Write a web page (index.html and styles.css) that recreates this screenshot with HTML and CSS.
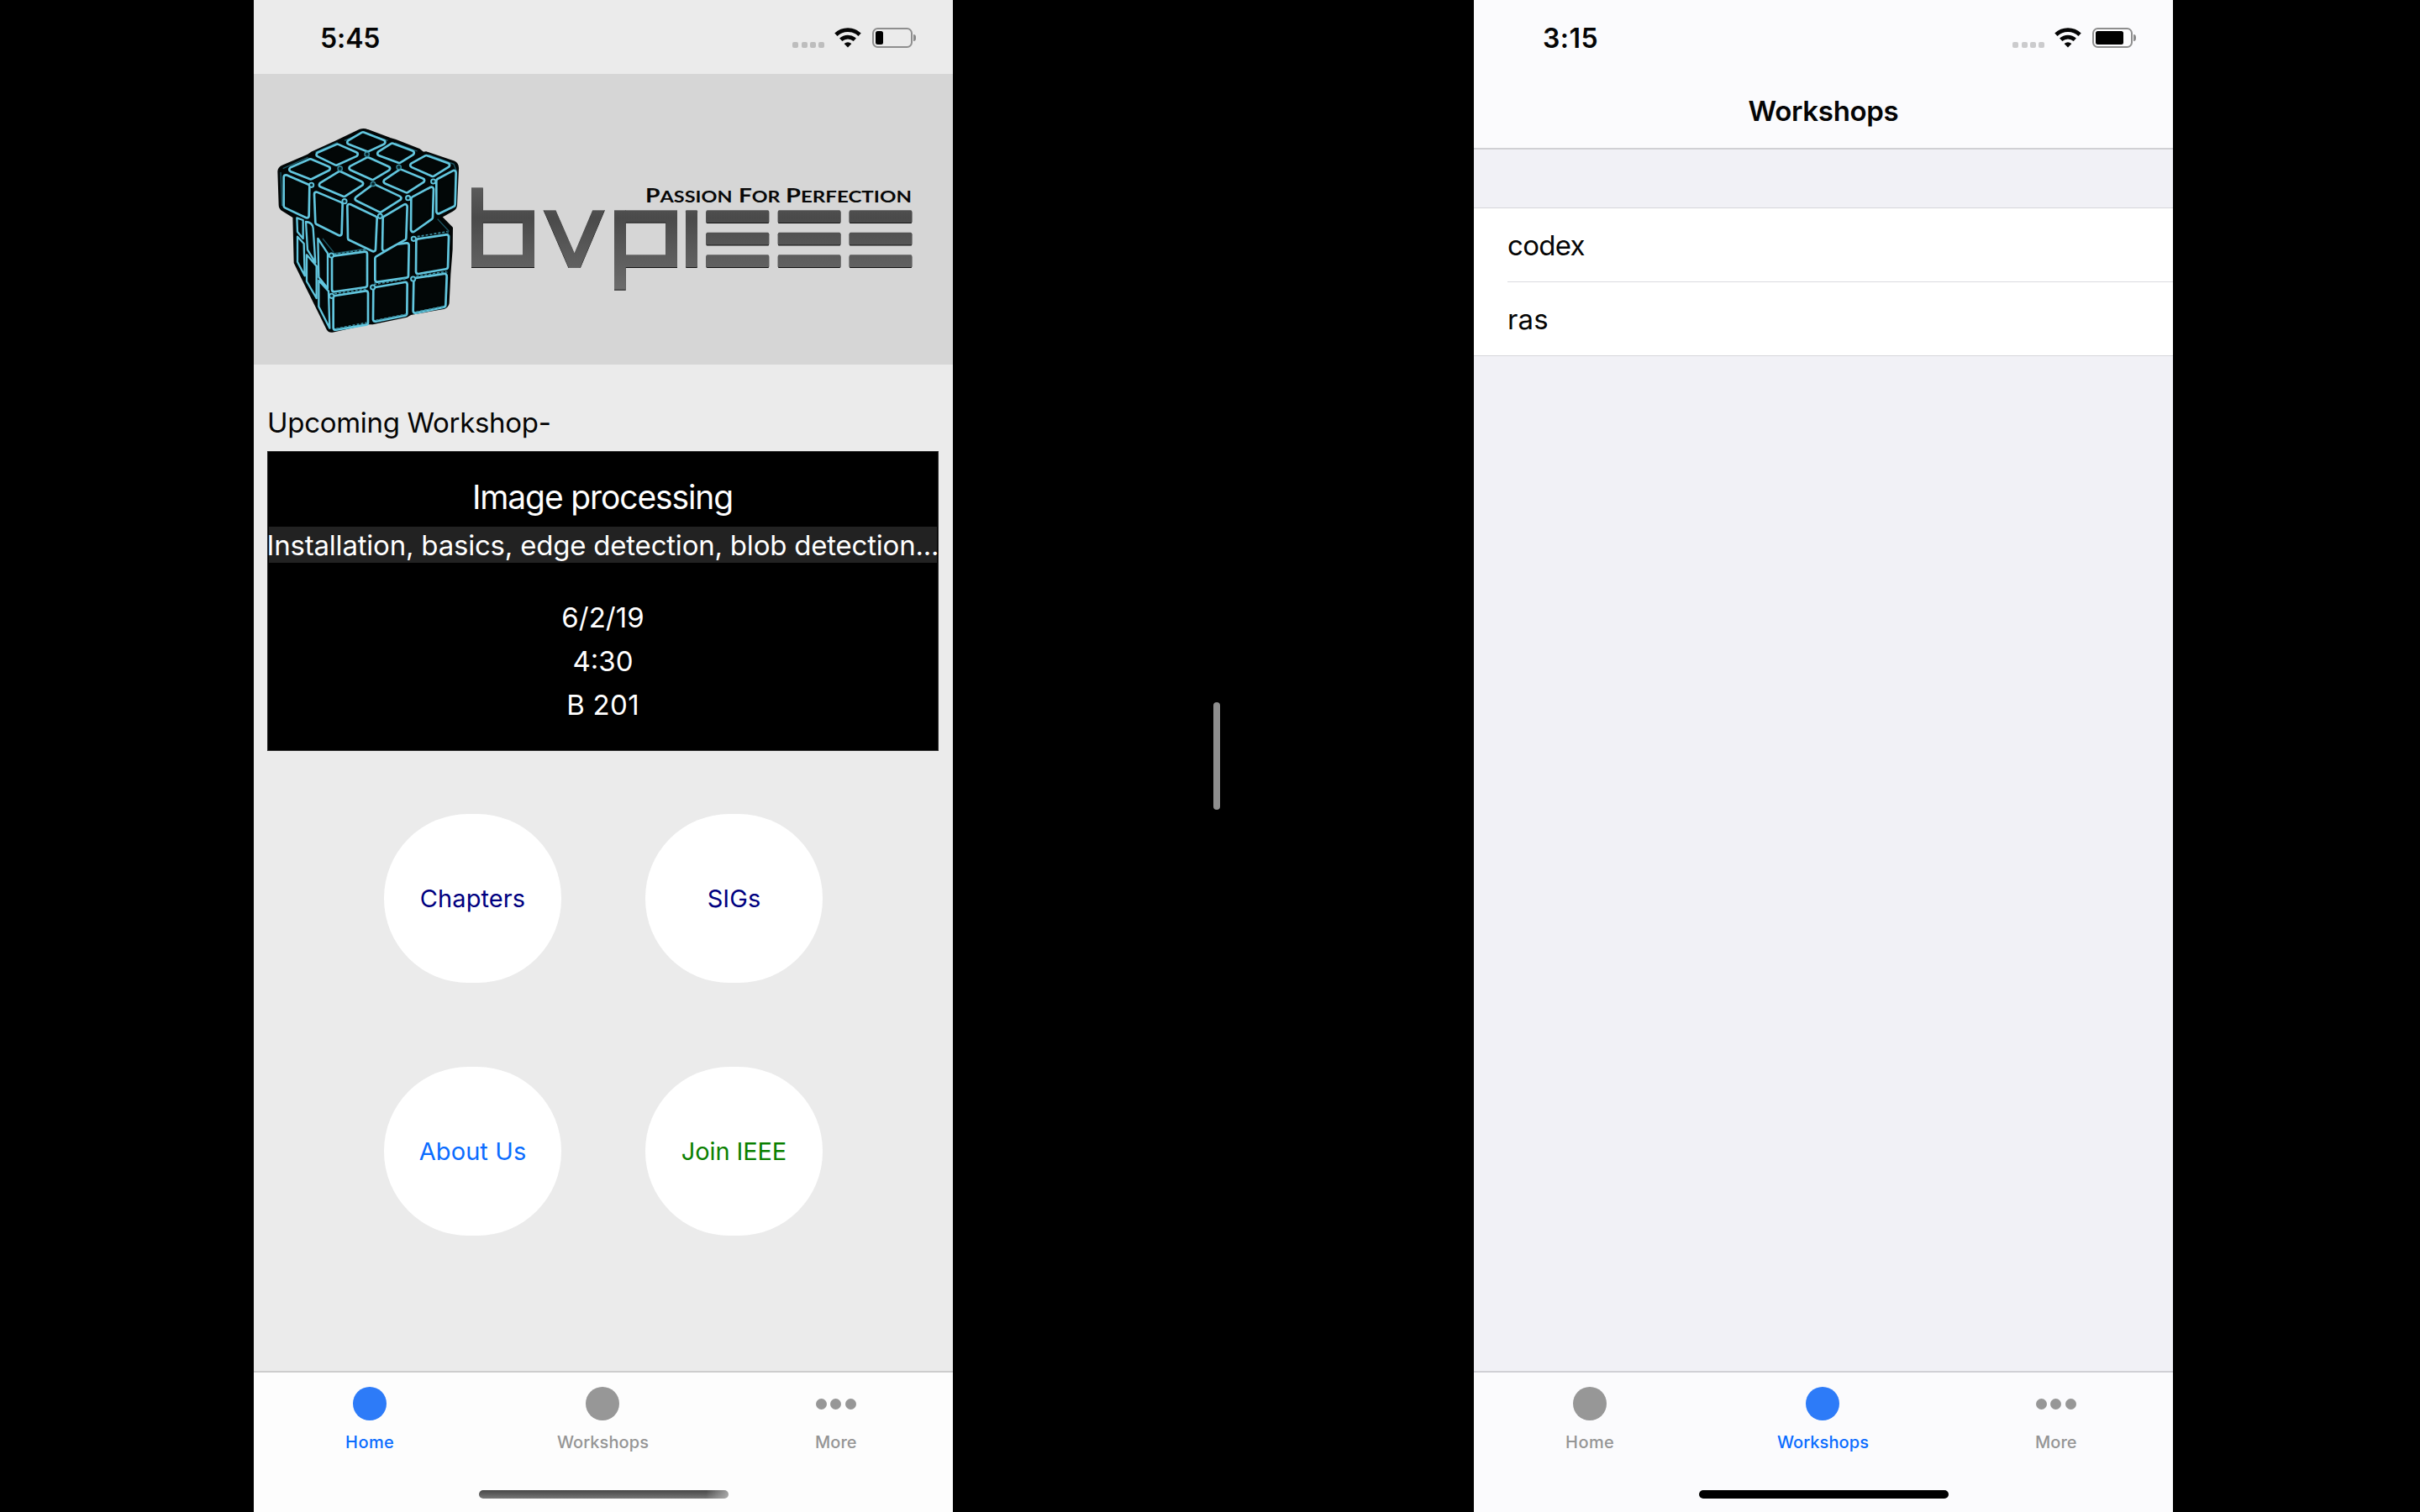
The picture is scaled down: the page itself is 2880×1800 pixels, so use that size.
FILE: index.html
```
<!DOCTYPE html>
<html lang="en">
<head>
<meta charset="utf-8">
<title>BVPIEEE app</title>
<link rel="stylesheet" href="styles.css">
</head>
<body>
<svg class="defs" aria-hidden="true">
  <symbol id="wifi" viewBox="0 0 32 24">
    <g fill="none" stroke="#050505" stroke-width="4.8">
      <path d="M1.9 8.2A20.5 20.5 0 0 1 30.1 8.2"/>
      <path d="M7.7 14.3A12.2 12.2 0 0 1 24.3 14.3"/>
    </g>
    <path fill="#050505" d="M16 23.6 11.6 19.1Q16 15.2 20.4 19.1Z"/>
  </symbol>
</svg>
<main class="stage">
  <section class="phone phone-home">
    <header class="status">
      <span class="time">5:45</span>
      <div class="indicators">
        <div class="signal"><i></i><i></i><i></i><i></i></div>
        <svg class="wifi"><use href="#wifi"/></svg>
        <div class="battery low"><i></i></div>
        <div class="nub"></div>
      </div>
    </header>
    <svg class="banner" viewBox="302 88 832 346" role="img" aria-label="bvpieee">
      <defs>
        <linearGradient id="steel" gradientUnits="userSpaceOnUse" x1="0" y1="223" x2="0" y2="345">
          <stop offset="0" stop-color="#5b5b5b"/><stop offset=".3" stop-color="#4a4a4a"/><stop offset="1" stop-color="#6c6c6c"/>
        </linearGradient>
        <g id="tiles" stroke-linejoin="round">
          <path d="M366 90 437 118 383 143 318 118ZM275 133 339 161 270 192 208 162ZM470 130 540 156 495 184 426 158ZM178 186 240 212 180 242 111 215ZM383 180 454 212 400 244 325 210ZM592 173 667 200 615 232 543 200ZM283 230 358 266 298 304 218 270ZM500 223 577 255 522 290 448 258ZM405 276 494 318 428 360 346 320Z"/>
          <path d="M91 243 167 276 165 380 91 345ZM200 304 285 340 282 443 204 404ZM318 347 408 390 403 500 320 460ZM445 390 516 348 512 460 443 498ZM546 320 610 286 607 386 545 430ZM636 256 690 227 687 340 636 365Z"/>
          <path d="M263 532 373 517 373 628 263 644ZM417 533 490 490 522 486 520 594 417 609ZM564 471 664 456 661 563 563 580ZM268 674 376 657 376 762 268 780ZM411 644 516 626 515 729 410 750ZM555 611 657 596 653 699 553 720Z"/>
        </g>
      </defs>
      <g transform="translate(310 130) scale(.33333)">
        <path fill="#020606" stroke="#020606" stroke-width="10" stroke-linejoin="round" d="M356 76Q369 71 382 77L462 107 480 112 566 146 580 157 592 156 690 189Q705 196 703 215L697 344Q695 355 685 360L642 384 682 424 681 500 674 590 669 692Q667 704 654 709L536 730 522 738 400 764 388 763 256 792Q246 794 240 784L124 548 120 384 78 358Q70 352 70 342L66 222Q67 211 79 205L170 166 186 155 270 117Z"/>
        <path fill="none" stroke="#1c5563" stroke-width="4" d="M72 225 77 345M80 212 170 172M196 154 275 119M300 112 366 84 455 112M480 120 560 150M600 162 690 196 700 222M632 392 672 435 668 445M222 462 262 512M258 516 380 498M260 648 385 632M405 620 530 600M556 600 668 582M675 450 670 570M668 600 662 700"/>
        <use href="#tiles" fill="#62c6de" stroke="#62c6de" stroke-width="24"/>
        <use href="#tiles" fill="#020707" stroke="#020707" stroke-width="8"/>
        <g fill="#020707" stroke="#62c6de" stroke-width="7" stroke-linejoin="round">
          <path d="M130 388 152 396 152 462 132 438ZM162 402Q186 404 188 425L196 548 168 502ZM205 462 240 515 240 640 208 600ZM132 455 155 480 158 595 132 545ZM165 520 200 560 200 675 165 615ZM208 612 243 650 247 782 208 705Z"/>
        </g>
        <path fill="none" stroke="#3c8fa1" stroke-width="5" stroke-dasharray="9 6" d="M262 518 375 502M264 659 380 642M405 626 520 606M560 455 668 437M556 597 664 580M270 784 380 762M412 754 520 732M556 724 655 704"/>
        <g fill="#06252c" stroke="#62c6de" stroke-width="5.5">
          <circle cx="182" cy="271" r="8"/><circle cx="300" cy="329" r="8"/><circle cx="427" cy="382" r="8"/><circle cx="527" cy="317" r="8"/><circle cx="617" cy="258" r="8"/><circle cx="253" cy="522" r="8"/><circle cx="547" cy="463" r="8"/><circle cx="254" cy="667" r="8"/><circle cx="401" cy="636" r="8"/><circle cx="545" cy="606" r="8"/>
        </g>
        <g fill="#06252c" stroke="#3a8ea1" stroke-width="4">
          <circle cx="284" cy="212" r="8"/><circle cx="380" cy="161" r="8"/><circle cx="494" cy="207" r="8"/><circle cx="402" cy="267" r="8"/>
        </g>
      </g>
      <g class="wordmark" fill="url(#steel)">
        <rect x="561" y="223.3" width="13.8" height="94.7"/>
        <rect x="574" y="250.3" width="62" height="14.4"/>
        <rect x="574" y="303.3" width="62" height="14.7"/>
        <rect x="622" y="264" width="14" height="40"/>
        <polyline fill="none" stroke="url(#steel)" stroke-width="13.2" stroke-linejoin="bevel" points="651.5,244 683.7,318 715,244"/>
        <rect x="731" y="250.3" width="13.8" height="94.4"/>
        <rect x="744" y="250.3" width="62" height="14.4"/>
        <rect x="744" y="303.3" width="62" height="14.7"/>
        <rect x="792.3" y="264" width="13.7" height="40"/>
        <rect x="816" y="250.3" width="14" height="67.7" rx="1"/>
        <rect x="840.4" y="250.3" width="74.8" height="14.7" rx="1.5"/><rect x="925.8" y="250.3" width="74.6" height="14.7" rx="1.5"/><rect x="1010.7" y="250.3" width="74.6" height="14.7" rx="1.5"/>
        <rect x="840.4" y="276.7" width="74.8" height="14.8" rx="1.5"/><rect x="925.8" y="276.7" width="74.6" height="14.8" rx="1.5"/><rect x="1010.7" y="276.7" width="74.6" height="14.8" rx="1.5"/>
        <rect x="840.4" y="303.3" width="74.8" height="14.7" rx="1.5"/><rect x="925.8" y="303.3" width="74.6" height="14.7" rx="1.5"/><rect x="1010.7" y="303.3" width="74.6" height="14.7" rx="1.5"/>
      </g>
      <rect x="642" y="238" width="83" height="12.3" fill="#d6d6d6"/>
      <rect x="665" y="319" width="38" height="10" fill="#d6d6d6"/>
      <g class="motto">
        <text x="768" y="241" textLength="103.5" lengthAdjust="spacingAndGlyphs">P<tspan class="sc">ASSION</tspan></text>
        <text x="879" y="241" textLength="49.5" lengthAdjust="spacingAndGlyphs">F<tspan class="sc">OR</tspan></text>
        <text x="935" y="241" textLength="150" lengthAdjust="spacingAndGlyphs">P<tspan class="sc">ERFECTION</tspan></text>
      </g>
    </svg>
    <div class="home-body">
      <h2 class="upcoming">Upcoming Workshop-</h2>
      <article class="card">
        <h3 class="card-title">Image processing</h3>
        <p class="card-topics">Installation, basics, edge detection, blob detection...</p>
        <div class="card-facts">
          <p>6/2/19</p>
          <p>4:30</p>
          <p class="room">B 201</p>
        </div>
      </article>
      <div class="bubbles">
        <a class="bubble navy">Chapters</a>
        <a class="bubble navy">SIGs</a>
        <a class="bubble blue">About Us</a>
        <a class="bubble green">Join IEEE</a>
      </div>
    </div>
    <nav class="tabs">
      <div class="tab active"><div class="icon"><i class="disc"></i></div><span class="l-home">Home</span></div>
      <div class="tab"><div class="icon"><i class="disc"></i></div><span>Workshops</span></div>
      <div class="tab"><div class="icon"><i class="dot"></i><i class="dot"></i><i class="dot"></i></div><span>More</span></div>
      <div class="grip fading"></div>
    </nav>
  </section>

  <div class="divider"></div>

  <section class="phone phone-list">
    <div class="nav-head">
      <header class="status">
        <span class="time">3:15</span>
        <div class="indicators">
          <div class="signal"><i></i><i></i><i></i><i></i></div>
          <svg class="wifi"><use href="#wifi"/></svg>
          <div class="battery"><i></i></div>
          <div class="nub"></div>
        </div>
      </header>
      <h1 class="nav-title">Workshops</h1>
    </div>
    <div class="list-body">
      <ul class="list">
        <li class="codex">codex</li>
        <li class="ras">ras</li>
      </ul>
    </div>
    <nav class="tabs">
      <div class="tab"><div class="icon"><i class="disc"></i></div><span class="l-home">Home</span></div>
      <div class="tab active"><div class="icon"><i class="disc"></i></div><span>Workshops</span></div>
      <div class="tab"><div class="icon"><i class="dot"></i><i class="dot"></i><i class="dot"></i></div><span>More</span></div>
      <div class="grip"></div>
    </nav>
  </section>
</main>
</body>
</html>
```
FILE: styles.css
```
* { box-sizing: border-box; margin: 0; padding: 0; }
body { background: #000; font-family: Inter, "Liberation Sans", sans-serif; color: #050505; }
.defs { display: none; }

.stage {
  display: grid;
  grid-template-columns: 832px 310px 8px 302px 832px;
  align-items: center;
  width: 2880px;
  height: 1800px;
  padding-left: 302px;
}
.phone { display: flex; flex-direction: column; height: 1800px; overflow: hidden; }
.phone-home { grid-column: 1; background: #ebebeb; }
.phone-list { grid-column: 5; background: #f1f1f6; }
.divider { grid-column: 3; height: 128px; border-radius: 4px; background: #8e8e8e; }

/* status bar */
.status { display: flex; justify-content: space-between; flex: none; height: 88px; padding: 0 44px 0 79px; }
.time { font-size: 32px; font-weight: 600; line-height: 92px; letter-spacing: -.1px; }
.phone-list .time { letter-spacing: .5px; padding-left: 3px; }
.indicators { display: flex; align-items: flex-start; padding-top: 33px; }
.signal { display: flex; gap: 3.2px; padding-top: 17px; margin-right: 12px; }
.signal i { width: 7px; height: 7px; border-radius: 2px; background: #bdbdbd; }
.phone-list .signal i { background: #cbcbcd; }
.wifi { width: 32px; height: 24px; margin-right: 12.5px; }
.battery { width: 48px; height: 24px; padding: 2.2px 2.6px; border: 2px solid #8e8e8e; border-radius: 6.5px; }
.battery i { display: block; width: 33px; height: 16px; border-radius: 2.5px; background: #000; }
.battery.low i { width: 8.5px; }
.nub { width: 3px; height: 8px; margin: 8px 0 0 1.5px; border-radius: 0 4px 4px 0; background: #8a8a8a; }

/* home screen */
.banner { flex: none; display: block; width: 832px; height: 346px; background: #d6d6d6; }
.motto { font: 700 23.4px Lato, "Liberation Sans", sans-serif; fill: #080808; }
.motto .sc { font-size: 19.4px; }
.wordmark { filter: drop-shadow(.5px 1.2px .3px #111); }
.home-body { flex: 1; padding: 49px 17px 0 16px; }
.upcoming { font-size: 33px; font-weight: 400; line-height: 40px; letter-spacing: -.31px; }
.card { height: 357px; margin-top: 14px; padding: 30px 1px 0; background: #000; border: 1px solid #2c2c2c; color: #fff; text-align: center; }
.card-title { padding-right: 1px; font-size: 39px; font-weight: 400; line-height: 48px; letter-spacing: -1.12px; }
.card-topics { display: flex; justify-content: center; height: 43px; margin-top: 11px; background: #222; font-size: 33px; line-height: 44px; letter-spacing: -.21px; white-space: nowrap; }
.card-facts { margin-top: 38.5px; font-size: 33px; line-height: 52.3px; }
.room { letter-spacing: .3px; }
.bubbles { display: grid; grid-template-columns: 211px 211px; grid-auto-rows: 201px; gap: 100.5px 100px; margin: 74.5px 0 0 139px; }
.bubble { display: flex; align-items: center; justify-content: center; border-radius: 100px; background: #fff; font-size: 29px; letter-spacing: .1px; }
.navy { color: #000080; }
.blue { color: #0a6cff; }
.green { color: #0a8000; letter-spacing: -.12px; }

/* tab bar */
.tabs { flex: none; display: grid; grid-template-columns: repeat(3, 1fr); grid-template-rows: 112px 1fr; height: 168px; padding-top: 17px; border-top: 2px solid #cdcdcd; background: #fdfdfd; }
.phone-list .tabs { background: #fbfbfd; border-color: #d0d0d5; }
.tab { display: flex; flex-direction: column; align-items: center; padding-right: 1px; color: #959595; }
.tab span { margin-top: 13px; font-size: 20px; font-weight: 500; line-height: 24px; letter-spacing: .08px; }
.tab .l-home { letter-spacing: .4px; }
.tab.active { color: #0a6cff; }
.icon { display: flex; gap: 4.6px; align-items: center; height: 40px; margin-bottom: .5px; }
.disc { width: 40px; height: 40px; border-radius: 50%; background: #979797; }
.dot { width: 13px; height: 13px; border-radius: 50%; background: #979797; }
.active .disc { background: #2d7bf8; }
.grip { grid-column: 1 / -1; justify-self: center; width: 297px; height: 10px; margin-top: 11px; border-radius: 5px; background: #000; }
.fading { background: linear-gradient(90deg, transparent 91%, rgba(190,190,190,.75)), linear-gradient(#474747, #777); }

/* workshops list */
.nav-head { flex: none; height: 178px; border-bottom: 2px solid #d0d0d4; background: #fbfbfd; }
.nav-title { text-align: center; font-size: 33px; font-weight: 600; line-height: 40px; margin-top: 24px; letter-spacing: -.31px; }
.list-body { flex: 1; padding-top: 69px; }
.list { list-style: none; background: #fff; border: solid #d6d6da; border-width: 1px 0; padding-left: 40px; }
.list li { height: 88px; font-size: 33px; line-height: 88.5px; }
.list .codex { letter-spacing: -.7px; border-bottom: 1px solid #dcdce0; }
.list .ras { height: 87px; letter-spacing: .2px; }
```
